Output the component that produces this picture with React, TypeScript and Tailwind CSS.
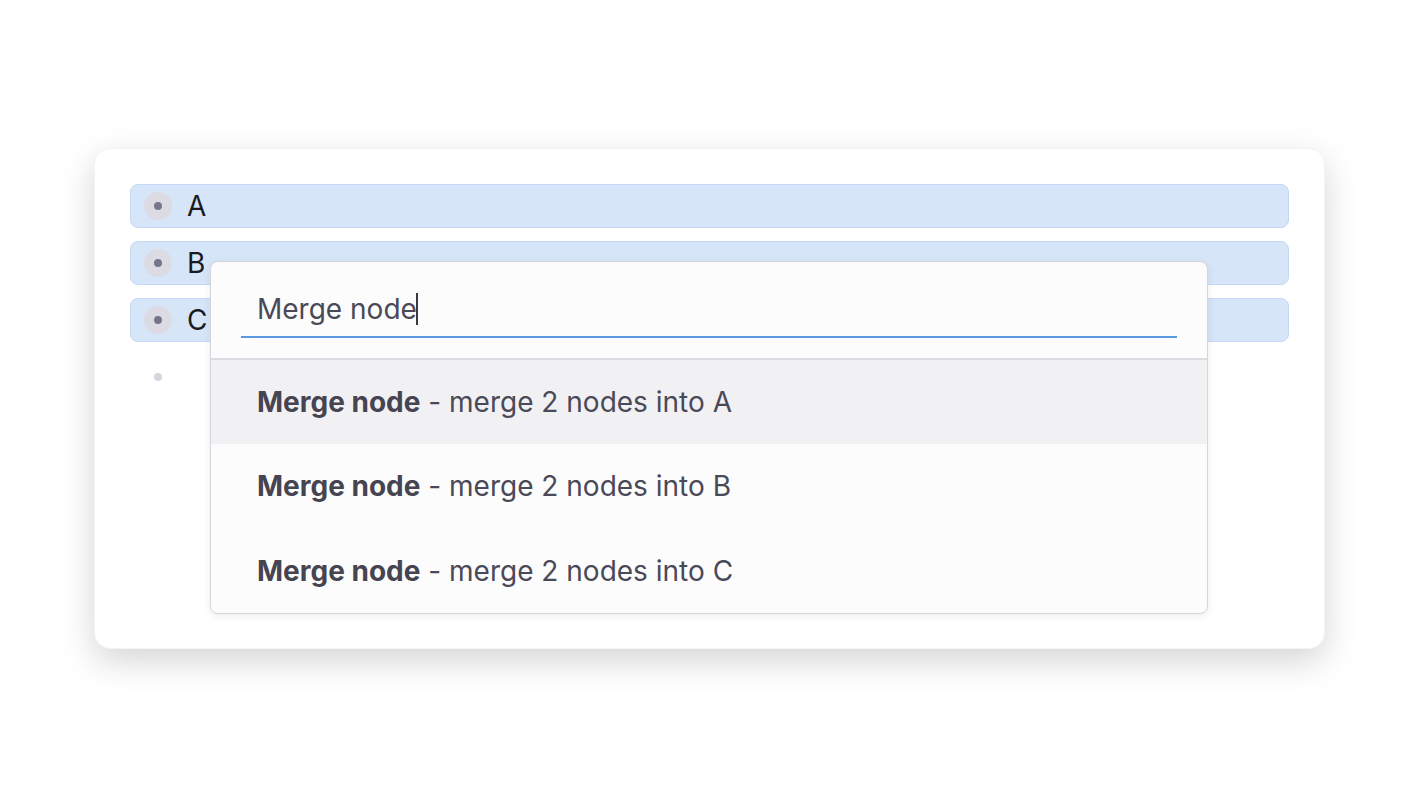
import React from 'react'

const nodes = ['A', 'B', 'C']

function Bullet({ active }: { active: boolean }) {
  return (
    <div className={`w-7 h-7 rounded-full flex items-center justify-center ${active ? 'bg-[#dcdbe4]' : ''}`}>
      <div className={`w-2 h-2 rounded-full ${active ? 'bg-[#77758c]' : 'bg-[#d6d5de]'}`} />
    </div>
  )
}

export default function App() {
  return (
    <div className="min-h-screen bg-white pt-[148px] pl-[94px]" style={{ fontFamily: 'Inter, "Noto Sans", sans-serif' }}>
      <div className="relative w-[1231px] h-[501px] bg-white rounded-2xl shadow-[0_12px_34px_rgba(0,0,0,0.17)] border border-[#f4f4f6] p-[35px]">
        <div className="flex flex-col gap-[13px]">
          {nodes.map((n) => (
            <div
              key={n}
              className="h-[44px] flex items-center gap-[15px] pl-[13px] rounded-lg bg-[#d6e6f8] border border-[#c2d8f4]"
            >
              <Bullet active />
              <span className="text-[28px] text-[#1b1b1f] leading-none">{n}</span>
            </div>
          ))}
          <div className="h-[44px] flex items-center pl-[14px]">
            <Bullet active={false} />
          </div>
        </div>

        {/* command popup */}
        <div className="absolute left-[115px] top-[112px] w-[998px] bg-[#fcfcfc] border border-[#d6d5dd] rounded-lg shadow-[0_2px_8px_rgba(0,0,0,0.08)] overflow-hidden">
          <div className="h-[98px] px-[30px] pt-[20px] border-b-2 border-[#dcdbe2]">
            <div className="border-b-2 border-[#5b9ae1] h-[56px] pl-[16px] flex items-center">
              <span className="text-[28px] text-[#4a4958] leading-none">Merge node</span>
              <span className="w-[2px] h-[32px] bg-[#3a3a44] -ml-[1px]" />
            </div>
          </div>
          {nodes.map((n, i) => (
            <div
              key={n}
              className={`h-[84px] flex items-center pl-[46px] text-[28px] text-[#4a4958] ${i === 0 ? 'bg-[#f1f1f4]' : ''} ${i === 2 ? 'h-[85px]' : ''}`}
            >
              <span className="font-bold text-[#454450]">Merge node</span>
              <span>&nbsp;- merge 2 nodes into {n}</span>
            </div>
          ))}
        </div>
      </div>
    </div>
  )
}
